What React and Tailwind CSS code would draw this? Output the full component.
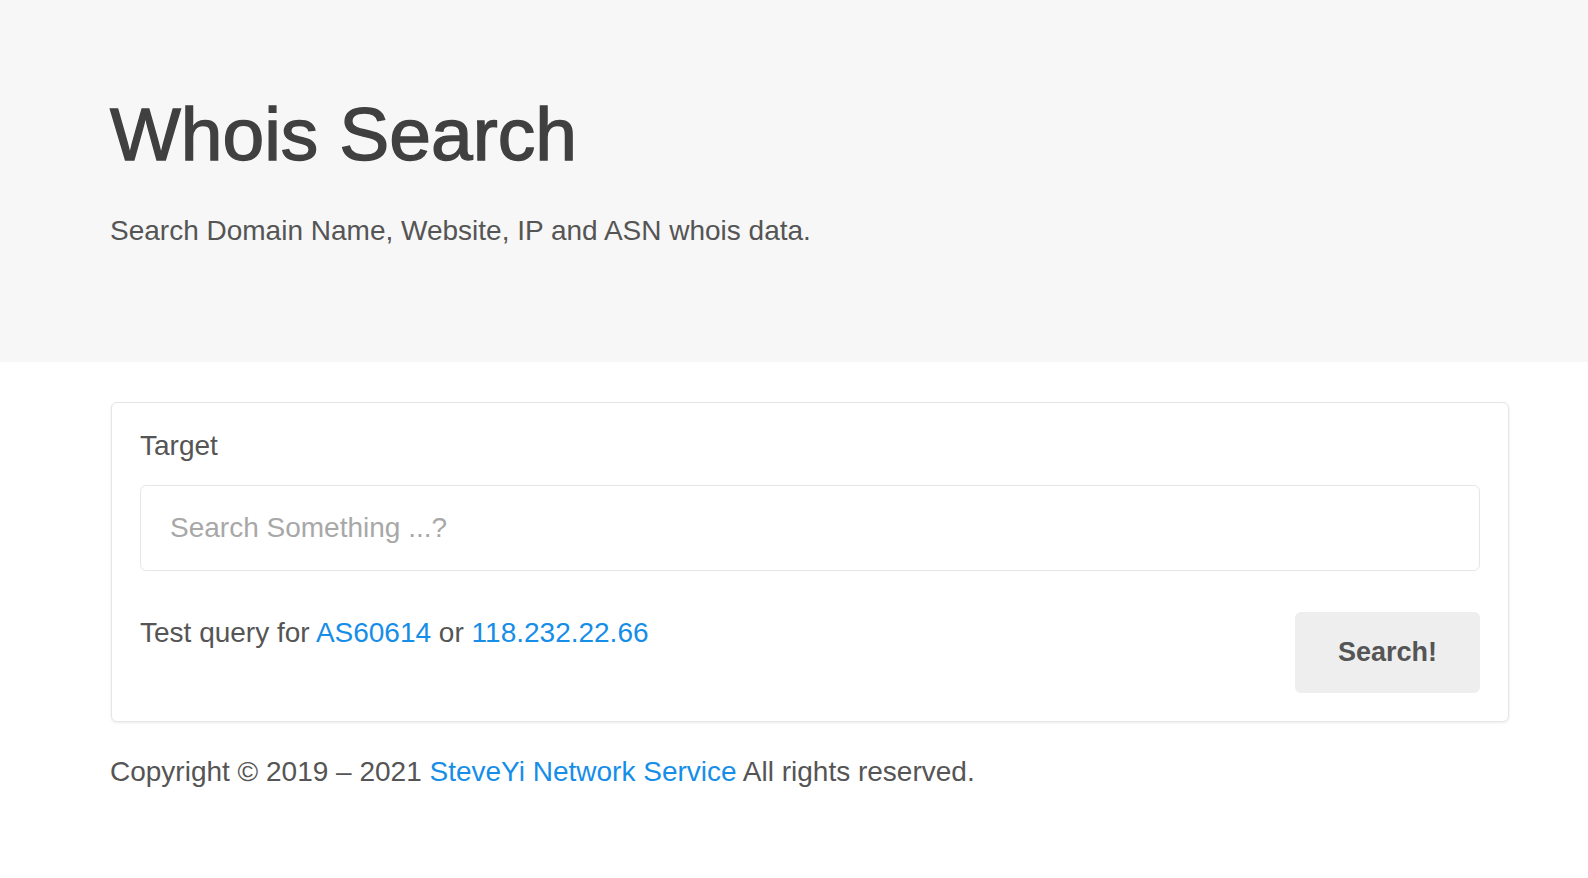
export default function App() {
  return (
    <div className="min-h-screen bg-white text-[#555] [font-family:'Liberation_Sans',Arial,sans-serif]">
      <header className="h-[362px] bg-[#f7f7f7] pl-[110px] pt-[97px]">
        <h1 className="text-[75px] leading-none text-[#404040] [-webkit-text-stroke:1.4px_#404040]">
          Whois Search
        </h1>
        <p className="mt-[38px] text-[28px] leading-[42px] text-[#555]">
          Search Domain Name, Website, IP and ASN whois data.
        </p>
      </header>

      <main className="ml-[111px] w-[1398px]">
        <div className="mt-[40px] rounded-[6px] border border-[#e6e6e6] bg-white px-[28px] pb-[28px] pt-[29px] shadow-[0_1px_3px_rgba(0,0,0,0.08)]">
          <label className="block text-[28px] leading-[28px] text-[#555]">Target</label>
          <input
            type="text"
            placeholder="Search Something ...?"
            className="mt-[25px] block h-[86px] w-full rounded-[6px] border border-[#e6e6e6] px-[29px] text-[28px] text-[#555] outline-none placeholder:text-[#a8a8a8]"
          />
          <div className="mt-[41px] flex items-start justify-between">
            <p className="text-[28px] leading-[42px] text-[#555]">
              Test query for <a className="text-[#168ee8]">AS60614</a> or{" "}
              <a className="text-[#168ee8]">118.232.22.66</a>
            </p>
            <button className="h-[81px] w-[185px] rounded-[6px] bg-[#eeeeee] text-[27px] font-bold text-[#555]">
              Search!
            </button>
          </div>
        </div>
      </main>

      <footer className="ml-[110px] mt-[29px] text-[28px] leading-[42px] text-[#555]">
        Copyright © 2019 – 2021 <a className="text-[#168ee8]">SteveYi Network Service</a> All rights reserved.
      </footer>
    </div>
  );
}
